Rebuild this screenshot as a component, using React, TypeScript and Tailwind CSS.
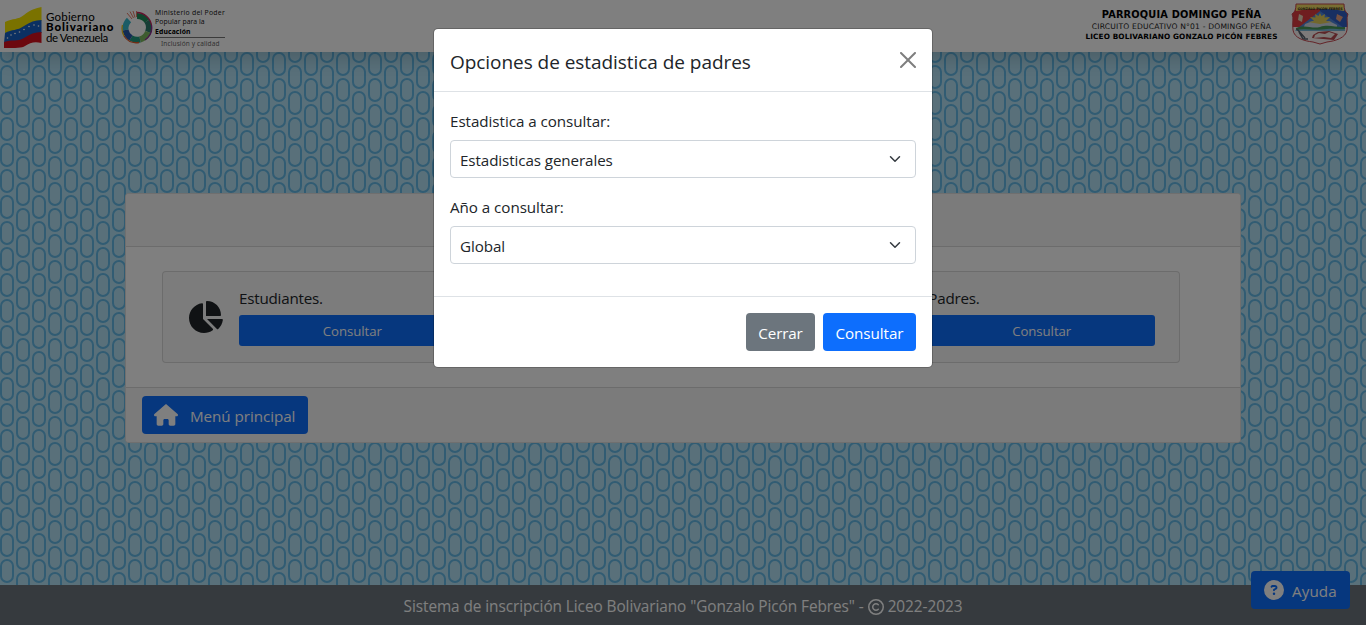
import React from "react";
import { FaChartPie, FaHouse, FaCircleQuestion, FaRegCopyright } from "react-icons/fa6";

function Pattern() {
  return (
    <svg className="absolute inset-0 h-full w-full" aria-hidden="true">
      <defs>
        <pattern id="capsules" width="32" height="26" patternUnits="userSpaceOnUse">
          <g fill="none" stroke="#62b8e6" strokeWidth="2">
            <rect x="17" y="1" width="12" height="22" rx="6" />
            <rect x="1" y="-12" width="12" height="22" rx="6" />
            <rect x="1" y="14" width="12" height="22" rx="6" />
          </g>
        </pattern>
      </defs>
      <rect width="100%" height="100%" fill="#b2e0f4" />
      <rect width="100%" height="100%" fill="url(#capsules)" />
    </svg>
  );
}

function FlagLogo() {
  return (
    <svg className="h-[42px] w-[38px]" viewBox="0 0 38 42">
      <path d="M1 16C9 12 14 14 20 9C26 4 32 2 37.500 1V15C30 15 26 18 20 22C13 26 8 24 1 28Z" fill="#f4e400" />
      <path d="M1 27C8 23 13 25 20 20C26 16 31 14 37.500 14V27C30 27 26 30 20 34C13 38 8 34 0 37Z" fill="#1760c4" />
      <path d="M0 36C8 33 13 36 20 32C26 28 31 26 37.500 26V37C30 35 26 37 21 40C18 42 12 42 0 42Z" fill="#d8101c" />
      <g fill="#fff">
        <circle cx="3.500" cy="32" r=".8" />
        <circle cx="7" cy="29" r=".8" />
        <circle cx="11" cy="27.500" r=".8" />
        <circle cx="15.500" cy="26" r=".8" />
        <circle cx="20" cy="23.500" r=".8" />
        <circle cx="25" cy="20.500" r=".8" />
        <circle cx="30" cy="19" r=".8" />
        <circle cx="34.500" cy="20" r=".8" />
      </g>
    </svg>
  );
}

function RingLogo() {
  return (
    <svg className="h-[34px] w-[32px]" viewBox="0 0 32 34">
      <g fill="none" strokeWidth="6">
        <path d="M16 6A12 12 0 0 1 26 11" stroke="#1e8c5a" />
        <path d="M26 11A12 12 0 0 1 27 22" stroke="#2f7d6c" />
        <path d="M27 22A12 12 0 0 1 19 29.500" stroke="#7cb860" />
        <path d="M19 29.500A12 12 0 0 1 10 28" stroke="#1e9a80" />
        <path d="M10 28A12 12 0 0 1 4.500 20" stroke="#2456a8" />
        <path d="M4.500 20A12 12 0 0 1 8 10" stroke="#36b8cc" />
      </g>
      <g fill="none" strokeWidth="1.300">
        <path d="M16 2.500A15 15 0 0 1 30.500 15" stroke="#c8245c" />
        <path d="M30.500 15A15 15 0 0 1 24 30" stroke="#8c2c90" />
        <path d="M18 32.500A15 15 0 0 1 3 26" stroke="#e05a28" />
        <path d="M3 26A15 15 0 0 1 1.500 15" stroke="#e8c020" />
        <path d="M6 3L11 9M9 1.500L12.500 8M12 1L14 7.500M15.500 1L15.500 7" stroke="#e0583c" strokeWidth=".8" />
      </g>
    </svg>
  );
}

function CrestLogo() {
  return (
    <svg className="h-[42px] w-[58px]" viewBox="0 0 58 42">
      <defs>
        <clipPath id="crest">
          <path d="M5 1H53C53 6 54 9 57 11C55 15 57 20 56 27C55 35 44 38 36 39L29 41L22 39C13 38 3 35 2 27C1 20 3 15 1 11C4 9 5 6 5 1Z" />
        </clipPath>
      </defs>
      <g clipPath="url(#crest)">
        <rect width="58" height="42" fill="#fbf5f5" />
        <path d="M0 0H29V24H0Z" fill="#de3d40" />
        <path d="M29 0H58V24H29Z" fill="#315ec4" />
        <path d="M29 8L7 25H53Z" fill="#4e86dc" />
        <path d="M14 21L22 18L29 20L38 18L46 22V26H12Z" fill="#d0d8e4" />
        <path d="M29 10L30.500 13L34 11L33.500 14.500L39 14L35 18L41 19L29 21L17 19L23 18L19 14L24.500 14.500L24 11L27.500 13Z" fill="#e4cf58" />
        <path d="M5 25C15 21 20 26 29 24C38 21 46 25 54 24V27H5Z" fill="#469858" />
        <path d="M4 27C15 25 24 28 36 26C43 25 50 27 54 26V28H5Z" fill="#78b8d8" />
        <path d="M4 0H54L53 8C37 5 21 5 5 8Z" fill="#f1dc65" />
        <path d="M22 32L27 29L38 28L47 31L43 37L21 35Z" fill="#b84a50" />
        <path d="M24 32L28 30L34 31L38 29L44 31L40 35L33 34L23 35Z" fill="#f6eee8" />
        <path d="M6 26L14 35M8 29L12 36M12 36L17 36" stroke="#59626f" strokeWidth="1.500" />
        <path d="M46 11L52 14L49 19L45 16Z" fill="#e8a080" />
        <path d="M8 11L12 13L11 19L7 17Z" fill="#e6d6b8" />
      </g>
      <path d="M5 1H53C53 6 54 9 57 11C55 15 57 20 56 27C55 35 44 38 36 39L29 41L22 39C13 38 3 35 2 27C1 20 3 15 1 11C4 9 5 6 5 1Z" fill="none" stroke="#c74850" />
      <text x="29" y="6.500" textAnchor="middle" fontFamily="DejaVu Sans" fontSize="3.300" fontWeight="700" letterSpacing="-0.050" fill="#332b12">GONZALO PICÓN FEBRES</text>
    </svg>
  );
}

function Header() {
  return (
    <header className="relative flex h-[52px] shrink-0 items-start justify-between bg-white shadow-[0_8px_16px_rgba(0,0,0,0.15)]">
      <div className="flex items-start pl-1">
        <div className="pt-[6px]"><FlagLogo /></div>
        <div className="ml-[4px] w-[75px] whitespace-nowrap pt-[12px] font-['Lato',sans-serif] text-[11.500px] leading-[10.300px] text-black">
          <p className="tracking-[0.200px]">Gobierno</p>
          <p className="font-black tracking-[0.900px]">Bolivariano</p>
          <p className="tracking-[-0.400px]">de Venezuela</p>
        </div>
        <div className="pt-[10px]"><RingLogo /></div>
        <div className="ml-[2px] w-[70px] whitespace-nowrap pt-[8px] font-['Noto_Sans',sans-serif] text-[6.800px] leading-[9.300px] text-[#222]">
          <p className="tracking-[0.280px]">Ministerio del Poder</p>
          <p className="tracking-[0.080px]">Popular para la</p>
          <p className="font-bold tracking-[0.150px] text-black">Educación</p>
          <p className="mt-[1px] border-t border-[#777] pl-[6px] pt-px text-[6.500px] tracking-[0.120px] text-[#666]">Inclusión y calidad</p>
        </div>
      </div>
      <div className="flex items-start pr-[17px]">
        <div className="mr-[13px] w-[193px] whitespace-nowrap pt-[9px] text-center font-['DejaVu_Sans',sans-serif] text-black">
          <p className="text-[9.800px] font-bold leading-[12px] tracking-[0.180px]">PARROQUIA DOMINGO PEÑA</p>
          <p className="text-[7.600px] leading-[11px] tracking-[0.180px] text-[#222]">CIRCUITO EDUCATIVO N°01 - DOMINGO PEÑA</p>
          <p className="text-[7.300px] font-bold leading-[9px] tracking-[0.130px]">LICEO BOLIVARIANO GONZALO PICÓN FEBRES</p>
        </div>
        <div className="pt-[3px]"><CrestLogo /></div>
      </div>
    </header>
  );
}

function StatCard({ label }: { label?: string }) {
  return (
    <div className="flex h-[92px] items-center rounded-[4px] border border-black/[0.125] bg-[#f8f8f8] pl-6 pr-6">
      {label && (
        <>
          <FaChartPie className="h-[36px] w-[36px] shrink-0" />
          <div className="ml-4 flex-1 pb-[2px]">
            <p className="mb-[5px] leading-6 tracking-[-0.220px]">{label}</p>
            <button className="block h-[31px] w-full rounded-[3px] bg-[#0d6efd] pt-[2px] text-[13.200px] text-white">Consultar</button>
          </div>
        </>
      )}
    </div>
  );
}

function SelectField({ label, value }: { label: string; value: string }) {
  return (
    <div className="mb-4">
      <p className="mb-2 h-6 pt-px leading-6">{label}</p>
      <button className="flex h-[38px] w-full items-center justify-between rounded-[4px] border border-[#ced4da] bg-white pl-[9px] pr-[14px] text-left">
        <span className="pt-[2px] tracking-[-0.100px]">{value}</span>
        <svg className="h-3 w-3" viewBox="0 0 16 16" fill="none" stroke="#343a40" strokeWidth="2" strokeLinecap="round" strokeLinejoin="round">
          <path d="m2 5 6 6 6-6" />
        </svg>
      </button>
    </div>
  );
}

function Modal() {
  return (
    <div role="dialog" className="absolute left-[433px] top-[28px] w-[500px] rounded-[5px] border border-black/20 bg-white bg-clip-padding">
      <div className="flex h-[63px] items-center justify-between border-b border-[#dee2e6] px-4">
        <h5 className="pt-[3px] text-[19px] leading-[30px] tracking-[-0.050px]">Opciones de estadistica de padres</h5>
        <svg className="h-4 w-4 opacity-50" viewBox="0 0 16 16">
          <path d="M.293.293a1 1 0 0 1 1.414 0L8 6.586 14.293.293a1 1 0 1 1 1.414 1.414L9.414 8l6.293 6.293a1 1 0 0 1-1.414 1.414L8 9.414l-6.293 6.293a1 1 0 0 1-1.414-1.414L6.586 8 .293 1.707a1 1 0 0 1 0-1.414z" />
        </svg>
      </div>
      <div className="flow-root p-4">
        <SelectField label="Estadistica a consultar:" value="Estadisticas generales" />
        <SelectField label="Año a consultar:" value="Global" />
      </div>
      <div className="flex justify-end gap-2 border-t border-[#dee2e6] p-4 text-white">
        <button className="h-[38px] w-[69px] rounded-[4px] bg-[#6c757d] pt-[3px] tracking-[-0.150px]">Cerrar</button>
        <button className="h-[38px] w-[93px] rounded-[4px] bg-[#0d6efd] pt-[3px]">Consultar</button>
      </div>
    </div>
  );
}

export default function App() {
  return (
    <div className="relative flex h-[625px] w-full flex-col overflow-hidden font-['Open_Sans','Noto_Sans',sans-serif] text-[15.200px] tracking-[-0.050px] text-[#212529]">
      <Pattern />
      <Header />
      <main className="relative flex flex-1 items-center justify-center pb-px">
        <section className="flex h-[250px] w-[1116px] flex-col rounded-[4px] border border-black/[0.125] bg-white">
          <div className="h-[53px] shrink-0 rounded-t-[3px] border-b border-black/[0.125] bg-[#f7f7f7]" />
          <div className="grid flex-1 grid-cols-3 items-center gap-4 pl-9 pr-[60px]">
            <StatCard label="Estudiantes." />
            <StatCard />
            <StatCard label="Padres." />
          </div>
          <div className="flex h-[55px] shrink-0 items-center rounded-b-[3px] border-t border-black/[0.125] bg-[#f7f7f7] px-4">
            <button className="flex h-[38px] w-[166px] items-center rounded-[4px] bg-[#0d6efd] pl-3 text-white">
              <FaHouse className="h-[22px] w-6" />
              <span className="ml-3 pt-[3px]">Menú principal</span>
            </button>
          </div>
        </section>
      </main>
      <footer className="relative flex h-10 shrink-0 items-center justify-center bg-[#6c757d] pt-[3px] text-[15.360px] text-white">
        <span className="tracking-[-0.070px]">Sistema de inscripción Liceo Bolivariano "Gonzalo Picón Febres" -</span>
        <FaRegCopyright className="mx-1 h-4 w-4" />
        <span>2022-2023</span>
      </footer>
      <button className="absolute bottom-4 right-4 flex h-[38px] w-[99px] items-center rounded-[4px] bg-[#0d6efd] pl-[13px] text-white">
        <FaCircleQuestion className="h-5 w-5" />
        <span className="ml-2 pt-[2px] tracking-[0.100px]">Ayuda</span>
      </button>
      <div className="absolute inset-0 bg-black/50" />
      <Modal />
    </div>
  );
}
